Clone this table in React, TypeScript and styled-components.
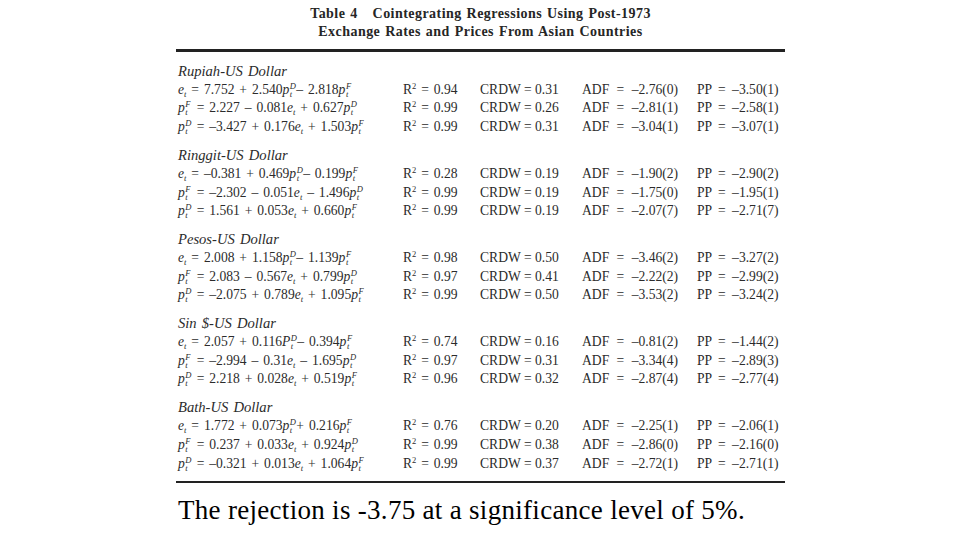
import React from "react";
import styled, { createGlobalStyle } from "styled-components";

const GlobalStyle = createGlobalStyle`
  html, body {
    margin: 0;
    padding: 0;
    background: #ffffff;
  }
`;

const Page = styled.div`
  width: 960px;
  height: 540px;
  background: #ffffff;
  font-family: "Liberation Serif", "Times New Roman", serif;
  color: #2b2b2b;
  padding-left: 176px;
  box-sizing: border-box;
  overflow: hidden;
`;

const TableBlock = styled.div`
  width: 609px;
`;

const Title = styled.div`
  padding-top: 5px;
  text-align: center;
  font-weight: bold;
  font-size: 14px;
  line-height: 18px;
  color: #262626;
  letter-spacing: 0.45px;
  word-spacing: 1px;
`;

const Rule = styled.div<{ $top: number; $thick: number }>`
  margin-top: ${(p) => p.$top}px;
  height: ${(p) => p.$thick}px;
  background: #222222;
`;

const Body = styled.div`
  padding: 10px 0 0 2px;
  font-size: 13.6px;
  line-height: 18.7px;
  word-spacing: 1.5px;
`;

const Group = styled.div`
  margin-bottom: 9.3px;
  &:last-child {
    margin-bottom: 0;
  }
`;

const Heading = styled.div`
  font-style: italic;
  font-size: 14.6px;
`;

const Row = styled.div`
  display: flex;
  white-space: nowrap;
`;

const Cell = styled.div<{ $w: number; $ws?: number }>`
  width: ${(p) => p.$w}px;
  flex: none;
  word-spacing: ${(p) => p.$ws ?? 1.5}px;
`;

const Sym = styled.span`
  font-style: italic;
`;

const SmallSub = styled.sub`
  font-size: 8.5px;
  font-style: italic;
  vertical-align: -3px;
  line-height: 0;
`;

const Scripts = styled.span`
  position: relative;
  display: inline-block;
  width: 7px;
  height: 1px;
  font-size: 8.5px;
  font-style: italic;
  line-height: 1;
`;

const Upper = styled.span`
  position: absolute;
  left: 0.5px;
  top: -11px;
`;

const Lower = styled.span`
  position: absolute;
  left: 0.5px;
  top: -3px;
`;

const Sup2 = styled.sup`
  font-size: 8.5px;
  vertical-align: 5px;
  line-height: 0;
`;

const Note = styled.div`
  margin-top: 12px;
  padding-left: 2px;
  font-size: 27px;
  line-height: 30px;
  letter-spacing: 0.3px;
  color: #000000;
`;

const E = () => (
  <>
    <Sym>e</Sym>
    <SmallSub>t</SmallSub>
  </>
);

const P = ({ s, cap }: { s: string; cap?: boolean }) => (
  <>
    <Sym>{cap ? "P" : "p"}</Sym>
    <Scripts>
      <Upper>{s}</Upper>
      <Lower>t</Lower>
    </Scripts>
  </>
);

type Line = { eq: React.ReactNode; r2: string; crdw: string; adf: string; pp: string };
type Section = { name: string; lines: Line[] };

const M = "\u2013";

const sections: Section[] = [
  {
    name: "Rupiah-US Dollar",
    lines: [
      { eq: <><E /> = 7.752 + 2.540<P s="D" />{M} 2.818<P s="F" /></>, r2: "0.94", crdw: "0.31", adf: `${M}2.76(0)`, pp: `${M}3.50(1)` },
      { eq: <><P s="F" /> = 2.227 {M} 0.081<E /> + 0.627<P s="D" /></>, r2: "0.99", crdw: "0.26", adf: `${M}2.81(1)`, pp: `${M}2.58(1)` },
      { eq: <><P s="D" /> = {M}3.427 + 0.176<E /> + 1.503<P s="F" /></>, r2: "0.99", crdw: "0.31", adf: `${M}3.04(1)`, pp: `${M}3.07(1)` },
    ],
  },
  {
    name: "Ringgit-US Dollar",
    lines: [
      { eq: <><E /> = {M}0.381 + 0.469<P s="D" />{M} 0.199<P s="F" /></>, r2: "0.28", crdw: "0.19", adf: `${M}1.90(2)`, pp: `${M}2.90(2)` },
      { eq: <><P s="F" /> = {M}2.302 {M} 0.051<E /> {M} 1.496<P s="D" /></>, r2: "0.99", crdw: "0.19", adf: `${M}1.75(0)`, pp: `${M}1.95(1)` },
      { eq: <><P s="D" /> = 1.561 + 0.053<E /> + 0.660<P s="F" /></>, r2: "0.99", crdw: "0.19", adf: `${M}2.07(7)`, pp: `${M}2.71(7)` },
    ],
  },
  {
    name: "Pesos-US Dollar",
    lines: [
      { eq: <><E /> = 2.008 + 1.158<P s="D" />{M} 1.139<P s="F" /></>, r2: "0.98", crdw: "0.50", adf: `${M}3.46(2)`, pp: `${M}3.27(2)` },
      { eq: <><P s="F" /> = 2.083 {M} 0.567<E /> + 0.799<P s="D" /></>, r2: "0.97", crdw: "0.41", adf: `${M}2.22(2)`, pp: `${M}2.99(2)` },
      { eq: <><P s="D" /> = {M}2.075 + 0.789<E /> + 1.095<P s="F" /></>, r2: "0.99", crdw: "0.50", adf: `${M}3.53(2)`, pp: `${M}3.24(2)` },
    ],
  },
  {
    name: "Sin $-US Dollar",
    lines: [
      { eq: <><E /> = 2.057 + 0.116<P s="D" cap />{M} 0.394<P s="F" /></>, r2: "0.74", crdw: "0.16", adf: `${M}0.81(2)`, pp: `${M}1.44(2)` },
      { eq: <><P s="F" /> = {M}2.994 {M} 0.31<E /> {M} 1.695<P s="D" /></>, r2: "0.97", crdw: "0.31", adf: `${M}3.34(4)`, pp: `${M}2.89(3)` },
      { eq: <><P s="D" /> = 2.218 + 0.028<E /> + 0.519<P s="F" /></>, r2: "0.96", crdw: "0.32", adf: `${M}2.87(4)`, pp: `${M}2.77(4)` },
    ],
  },
  {
    name: "Bath-US Dollar",
    lines: [
      { eq: <><E /> = 1.772 + 0.073<P s="D" />+ 0.216<P s="F" /></>, r2: "0.76", crdw: "0.20", adf: `${M}2.25(1)`, pp: `${M}2.06(1)` },
      { eq: <><P s="F" /> = 0.237 + 0.033<E /> + 0.924<P s="D" /></>, r2: "0.99", crdw: "0.38", adf: `${M}2.86(0)`, pp: `${M}2.16(0)` },
      { eq: <><P s="D" /> = {M}0.321 + 0.013<E /> + 1.064<P s="F" /></>, r2: "0.99", crdw: "0.37", adf: `${M}2.72(1)`, pp: `${M}2.71(1)` },
    ],
  },
];

export default function App() {
  return (
    <Page>
      <GlobalStyle />
      <TableBlock>
        <Title>
          <div>Table 4&nbsp;&nbsp;&nbsp;Cointegrating Regressions Using Post-1973</div>
          <div>Exchange Rates and Prices From Asian Countries</div>
        </Title>
        <Rule $top={8} $thick={3} />
        <Body>
          {sections.map((sec) => (
            <Group key={sec.name}>
              <Heading>{sec.name}</Heading>
              {sec.lines.map((ln, i) => (
                <Row key={i}>
                  <Cell $w={225}>{ln.eq}</Cell>
                  <Cell $w={77}>
                    R<Sup2>2</Sup2> = {ln.r2}
                  </Cell>
                  <Cell $w={102} $ws={0}>CRDW = {ln.crdw}</Cell>
                  <Cell $w={115} $ws={4}>ADF = {ln.adf}</Cell>
                  <Cell $w={88} $ws={3}>PP = {ln.pp}</Cell>
                </Row>
              ))}
            </Group>
          ))}
        </Body>
        <Rule $top={8} $thick={2} />
      </TableBlock>
      <Note>The rejection is -3.75 at a significance level of 5%.</Note>
    </Page>
  );
}
